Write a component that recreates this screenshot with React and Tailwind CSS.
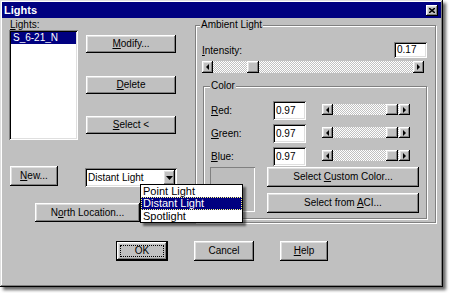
import React from "react";

const raised =
  "bg-[#c0c0c0] shadow-[inset_-1px_-1px_#000,inset_1px_1px_#fff,inset_-2px_-2px_#808080,inset_2px_2px_#dfdfdf]";
const sunken =
  "bg-white shadow-[inset_1px_1px_#808080,inset_-1px_-1px_#fff,inset_2px_2px_#000,inset_-2px_-2px_#dfdfdf]";
const checker =
  "bg-[repeating-conic-gradient(#c0c0c0_0_25%,#fff_0_50%)] bg-[length:2px_2px]";

function U({ children }) {
  return <span className="underline underline-offset-[1px]">{children}</span>;
}

function Button({ className = "", children }) {
  return (
    <div className={`${raised} flex items-center justify-center ${className}`}>
      {children}
    </div>
  );
}

function Tri({ dir }) {
  if (dir === "down")
    return (
      <svg width="7" height="4" viewBox="0 0 7 4">
        <path d="M0 0 H7 L3.5 4 Z" fill="#000" />
      </svg>
    );
  return (
    <svg width="3" height="6" viewBox="0 0 3 6">
      {dir === "left" ? (
        <path d="M3 0 L0 3 L3 6 Z" fill="#000" />
      ) : (
        <path d="M0 0 L3 3 L0 6 Z" fill="#000" />
      )}
    </svg>
  );
}

function Scroll({ className, arrowCls, thumbCls }) {
  return (
    <div className={`flex ${className}`}>
      <div className={`${raised} ${arrowCls} flex items-center justify-center`}>
        <Tri dir="left" />
      </div>
      <div className={`flex-1 flex ${checker}`}>
        <div className={`${raised} ${thumbCls}`} />
      </div>
      <div className={`${raised} ${arrowCls} flex items-center justify-center`}>
        <Tri dir="right" />
      </div>
    </div>
  );
}

function TextBox({ className, value }) {
  return (
    <div className={`${sunken} ${className} pl-[3px] flex items-center`}>
      {value}
    </div>
  );
}

function ColorRow({ label, rest }) {
  return (
    <div className="flex items-start h-[19px]">
      <div className="w-[69px] pl-[7px] leading-[19px]">
        <U>{label}</U>
        {rest}
      </div>
      <TextBox className="w-[33px] h-[19px]" value="0.97" />
      <Scroll
        className="ml-[16px] mt-[3px] w-[88px] h-[11px]"
        arrowCls="w-[11px] h-[11px]"
        thumbCls="ml-auto mr-[1px] w-[12px] h-[11px]"
      />
    </div>
  );
}

export default function App() {
  return (
    <div className="w-[450px] h-[293px] bg-white font-['Liberation_Sans',Arial,sans-serif] text-[10px] leading-[12px] text-black overflow-hidden">
      <div className="relative w-[443px] h-[287px] bg-[#c0c0c0] shadow-[inset_-1px_-1px_#000,inset_1px_1px_#dfdfdf,inset_-2px_-2px_#808080,inset_2px_2px_#fff,3px_3px_3px_rgba(0,0,0,0.6)] flex flex-col">
        {/* Title bar */}
        <div className="mx-[2px] mt-[2px] h-[16px] bg-[#000080] flex items-center justify-between pl-[2px] pr-[3px]">
          <span className="text-white font-bold text-[11px] leading-[16px]">Lights</span>
          <div className={`${raised} w-[12px] h-[11px] flex items-center justify-center`}>
            <svg width="6" height="5" viewBox="0 0 6 5">
              <path d="M0 0 L6 5 M6 0 L0 5" stroke="#000" strokeWidth="1.5" />
            </svg>
          </div>
        </div>

        {/* Main row */}
        <div className="flex items-start pl-[9px]">
          {/* Left column */}
          <div className="flex flex-col w-[174px]">
            <div className="mt-[1px] h-[11px] leading-[11px] pl-[1px]">
              <U>L</U>ights:
            </div>
            <div className="flex items-start">
              <div className={`${sunken} w-[69px] h-[110px] p-[2px]`}>
                <div className="h-[12px] bg-[#000080] text-white pl-[2px] leading-[12px]">
                  S_6-21_N
                </div>
              </div>
              <div className="ml-[8px] flex flex-col">
                <Button className="mt-[5px] w-[90px] h-[18px]">
                  <span>
                    <U>M</U>odify...
                  </span>
                </Button>
                <Button className="mt-[23px] w-[90px] h-[18px]">
                  <span>
                    <U>D</U>elete
                  </span>
                </Button>
                <Button className="mt-[22px] w-[90px] h-[18px]">
                  <span>
                    <U>S</U>elect &lt;
                  </span>
                </Button>
              </div>
            </div>
            <div className="flex items-start mt-[26px]">
              <Button className="ml-[1px] w-[48px] h-[20px]">
                <span>
                  <U>N</U>ew...
                </span>
              </Button>
              <div className={`${sunken} ml-[27px] mt-[2px] w-[92px] h-[19px] flex items-center justify-between pl-[3px] pr-[2px]`}>
                <span>Distant Light</span>
                <div className={`${raised} w-[12px] h-[15px] flex items-center justify-center`}>
                  <Tri dir="down" />
                </div>
              </div>
            </div>
            <Button className="mt-[16px] ml-[26px] w-[105px] h-[19px]">
              <span>
                N<U>o</U>rth Location...
              </span>
            </Button>
          </div>

          {/* Ambient light group */}
          <div className="relative ml-[12px] mt-[7px] w-[241px] h-[198px] border border-[#808080] shadow-[inset_1px_1px_#fff,1px_1px_#fff] flex flex-col">
            <span className="absolute -top-[7px] left-[4px] bg-[#c0c0c0] px-[1px] leading-[12px]">
              Ambient Light
            </span>
            <div className="flex items-end justify-between mt-[16px] pl-[6px] pr-[8px]">
              <div className="leading-[12px] mb-[1px]">
                <U>I</U>ntensity:
              </div>
              <TextBox className="w-[33px] h-[16px]" value="0.17" />
            </div>
            <Scroll
              className="mt-[3px] ml-[6px] w-[222px] h-[12px]"
              arrowCls="w-[11px] h-[12px]"
              thumbCls="ml-[34px] w-[12px] h-[12px]"
            />

            {/* Color group */}
            <div className="relative mt-[13px] ml-[7px] w-[224px] h-[133px] border border-[#808080] shadow-[inset_1px_1px_#fff,1px_1px_#fff] flex flex-col">
              <span className="absolute -top-[7px] left-[6px] bg-[#c0c0c0] px-[1px] leading-[12px]">
                Color
              </span>
              <div className="flex flex-col gap-[4px] mt-[14px]">
                <ColorRow label="R" rest="ed:" />
                <ColorRow label="G" rest="reen:" />
                <ColorRow label="B" rest="lue:" />
              </div>
              <div className="flex items-start mt-[1px]">
                <div className="ml-[6px] w-[45px] h-[45px] bg-[#bdbdbd] shadow-[inset_1px_1px_#808080,inset_-1px_-1px_#fff]" />
                <div className="ml-[12px] flex flex-col gap-[6px]">
                  <Button className="w-[152px] h-[20px]">
                    <span>
                      Select <U>C</U>ustom Color...
                    </span>
                  </Button>
                  <Button className="w-[152px] h-[20px]">
                    <span>
                      Select from <U>A</U>CI...
                    </span>
                  </Button>
                </div>
              </div>
            </div>
          </div>
        </div>

        {/* Bottom buttons */}
        <div className="flex mt-[18px] pl-[116px]">
          <div className="w-[52px] h-[20px] border border-black">
            <div className={`${raised} w-full h-full p-[3px]`}>
              <div className="w-full h-full border border-dotted border-black flex items-center justify-center leading-[10px]">
                OK
              </div>
            </div>
          </div>
          <Button className="ml-[26px] w-[60px] h-[20px]">Cancel</Button>
          <Button className="ml-[26px] w-[48px] h-[20px]">
            <span>
              <U>H</U>elp
            </span>
          </Button>
        </div>

        {/* Dropdown list overlay */}
        <div className="absolute left-[140px] top-[184px] w-[103px] h-[39px] bg-white border border-black shadow-[3px_3px_2px_rgba(0,0,0,0.5)] text-[11px] leading-[12px] flex flex-col">
          <div className="h-[12px] pl-[2px]">Point Light</div>
          <div className="h-[13px] pl-[1px] bg-[#000080] text-white border border-dotted border-[#ffff80] leading-[11px]">
            Distant Light
          </div>
          <div className="h-[12px] pl-[2px]">Spotlight</div>
        </div>
      </div>
    </div>
  );
}
